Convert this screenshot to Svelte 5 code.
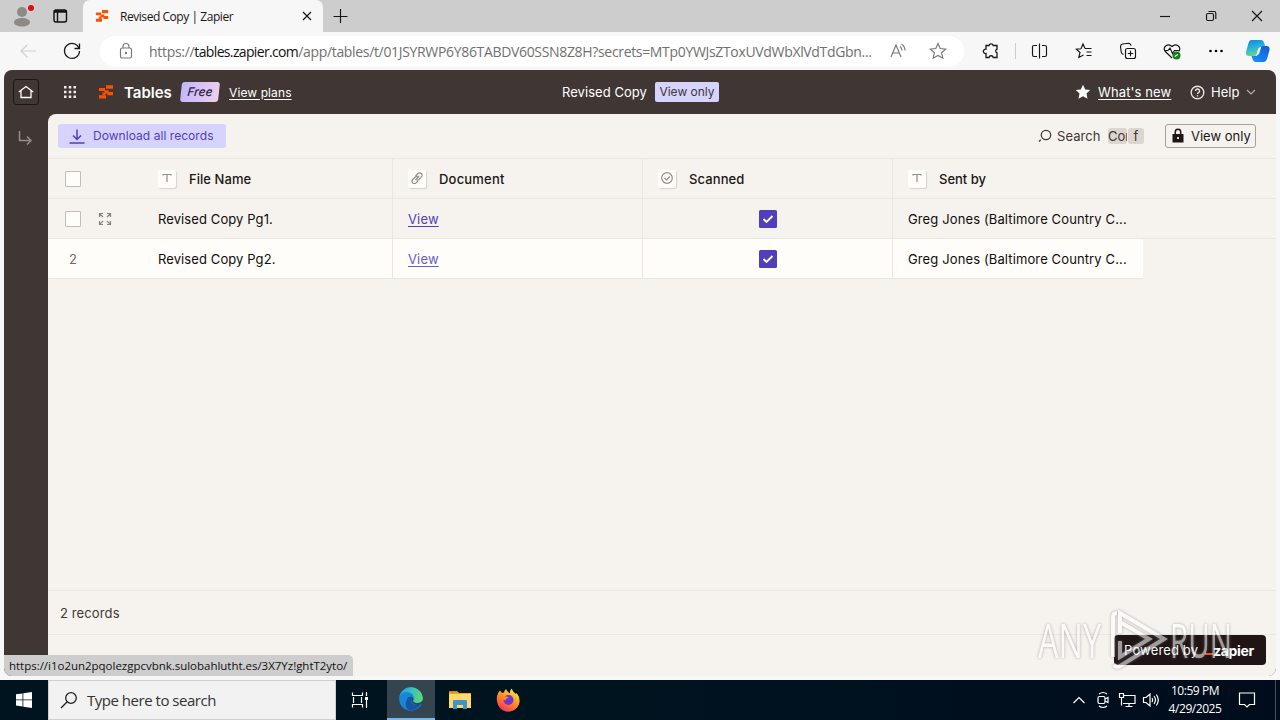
<script lang="ts">
  type ColumnType = 'text' | 'link' | 'check';

  interface RecordRow {
    id: number;
    fileName: string;
    sentBy: string;
    scanned: boolean;
  }

  const columns: { label: string; type: ColumnType; spacing: number }[] = [
    { label: 'File Name', type: 'text', spacing: 0.05 },
    { label: 'Document', type: 'link', spacing: 0.2 },
    { label: 'Scanned', type: 'check', spacing: 0.1 },
    { label: 'Sent by', type: 'text', spacing: 0 }
  ];

  const rows: RecordRow[] = [
    { id: 1, fileName: 'Revised Copy Pg1.', sentBy: 'Greg Jones (Baltimore Country C...', scanned: true },
    { id: 2, fileName: 'Revised Copy Pg2.', sentBy: 'Greg Jones (Baltimore Country C...', scanned: true }
  ];

  let hoveredRow = $state(1);
  let selected = $state<number[]>([]);

  function toggle(id: number): void {
    selected = selected.includes(id) ? selected.filter((item) => item !== id) : [...selected, id];
  }
</script>

{#snippet zapierMark(size: number)}
  <svg width={size} height={size} viewBox="0 0 16 16" fill="#ff4f00">
    <path d="M8 1.200h7v3.600H8zM1 4h6v3H1zM6.500 6.200h4v3.200h-4zM9.500 8h5.500v3.300H9.500zM4.500 8.500h3v2.500h-3zM1 11.200h7v3.400H1z" />
  </svg>
{/snippet}

{#snippet typeIcon(type: ColumnType)}
  <span class="type-icon">
    {#if type === 'text'}
      <svg width="18" height="18" viewBox="0 0 18 18"><path d="M5 5.500V4.500h8v1M9 4.500V12" /></svg>
    {:else if type === 'link'}
      <svg width="18" height="18" viewBox="0 0 18 18">
        <path d="M7.500 10l3.500-4M7.500 6l2.500-2.500a2.300 2.300 0 0 1 3.400 3.400L11 9.500a2.300 2.300 0 0 1-2 .6M10 6.500a2.300 2.300 0 0 0-2.500.3L4.700 9.500A2.300 2.300 0 0 0 8 12.800L10 11" />
      </svg>
    {:else}
      <svg width="18" height="18" viewBox="0 0 18 18"><circle cx="9" cy="8" r="5.300" /><path d="M6.500 8l2 2 3.200-3.500" /></svg>
    {/if}
  </span>
{/snippet}

<div class="screen">
  <header class="tabstrip">
    <span class="slot profile">
      <svg width="26" height="26" viewBox="0 0 26 26">
        <circle cx="13" cy="9" r="5" fill="#8d8986" />
        <path d="M5 19.500c0-3 3.500-4.500 8-4.500s8 1.500 8 4.500c0 2-3.500 4-8 4s-8-2-8-4z" fill="#8d8986" />
        <circle cx="22" cy="5" r="3" fill="#e50914" />
      </svg>
    </span>
    <span class="slot workspaces">
      <svg width="16" height="16" viewBox="0 0 16 16" fill="none" stroke="#111" stroke-width="1.400">
        <rect x="2" y="2" width="12.500" height="12" rx="2" /><path d="M2 3.500h12.500" stroke-width="2.400" /><path d="M5.500 4v10" />
      </svg>
    </span>
    <div class="tab">
      {@render zapierMark(14)}
      <span class="tab-title">Revised Copy | Zapier</span>
      <svg width="12" height="12" viewBox="0 0 12 12" class="line"><path d="M2 2l8 8M10 2l-8 8" /></svg>
    </div>
    <span class="slot new-tab">
      <svg width="16" height="16" viewBox="0 0 16 16" class="line"><path d="M7.500 1v14M.5 8.500h14" /></svg>
    </span>
    <div class="window-controls">
      <svg width="46" height="32" viewBox="0 0 46 32" class="line"><path d="M18 16.500h10" /></svg>
      <svg width="46" height="32" viewBox="0 0 46 32" class="line">
        <rect x="18.500" y="13.500" width="7" height="7" rx="1.500" /><path d="M20.500 11.500H26q1.800 0 1.800 1.800V19" />
      </svg>
      <svg width="46" height="32" viewBox="0 0 46 32" class="line"><path d="M18 11l10 10M28 11L18 21" /></svg>
    </div>
  </header>

  <div class="navbar">
    <span class="tool">
      <svg width="20" height="20" viewBox="0 0 20 20" class="line faint"><path d="M18 10H3M9.500 3.500L3 10l6.500 6.500" /></svg>
    </span>
    <span class="tool">
      <svg width="20" height="20" viewBox="0 0 20 20" class="line"><path d="M17 7.200A7.500 7.500 0 1 0 17.500 10M17.500 2.500v5h-5" stroke-width="1.300" /></svg>
    </span>
    <div class="address">
      <svg width="14" height="18" viewBox="0 0 14 18" class="line grey">
        <rect x="1.500" y="6" width="11" height="10" rx="1.800" /><path d="M4 6V4.500a3 3 0 0 1 6 0V6" /><circle cx="7" cy="11" r=".6" />
      </svg>
      <span class="url">https://<b>tables.zapier.com</b><span class="path">/app/tables/t/01JSYRWP6Y86TABDV60SSN8Z8H?secrets=MTp0YWJsZToxUVdWbXlVdTdGbn...</span></span>
      <svg width="18" height="18" viewBox="0 0 18 18" class="line grey read">
        <path d="M2 15L7 3l5 12M4 11h6M11 4.500q2 1.500 2 4M12.500 2q3.500 2.500 3.500 6.500" />
      </svg>
      <svg width="18" height="18" viewBox="0 0 18 18" class="line grey">
        <path d="M9 1.500l2.200 5 5.500.6-4.100 3.700 1.200 5.400L9 13.500l-4.800 2.700 1.200-5.400L1.300 7.100l5.500-.6z" />
      </svg>
    </div>
    <span class="tool">
      <svg width="18" height="18" viewBox="0 0 18 18" class="line">
        <path d="M4 3.500h3a2.200 2.200 0 0 1 4.200 0H15v3.700a1.900 1.900 0 0 0 0 3.600v4.700h-3.700a2.200 2.200 0 0 0-4.300 0H4v-4a2.200 2.200 0 1 1 0-4.300z" stroke-width="1.300" />
      </svg>
    </span>
    <span class="divider"></span>
    <span class="tool">
      <svg width="18" height="18" viewBox="0 0 18 18" class="line">
        <path d="M8.500 1.500v15M6 3.500H3q-1.500 0-1.500 1.500v8q0 1.500 1.500 1.500h3M11 3.500h3q1.500 0 1.500 1.500v8q0 1.500-1.500 1.500h-3" />
      </svg>
    </span>
    <span class="tool">
      <svg width="18" height="18" viewBox="0 0 18 18" class="line">
        <path d="M10 6.500h6.500M11.500 10h5M11.500 13.500h5M10 6.500L8 2 6 6.700l-4.700.5L5 10.500 3.800 15.500 8.500 13" />
      </svg>
    </span>
    <span class="tool">
      <svg width="18" height="18" viewBox="0 0 18 18" class="line">
        <rect x="6.500" y="6.500" width="10" height="10" rx="2" /><path d="M11.500 8.800v5.400M8.800 11.500h5.400M4.500 12.500Q2.500 12 2.200 10L1.500 4.500Q1.500 2.500 3.500 2l6-.8q2 0 2.500 2.500" />
      </svg>
    </span>
    <span class="tool">
      <svg width="18" height="18" viewBox="0 0 18 18" class="line">
        <path d="M9 16L2.300 9.500C-1 5 5 .5 9 4.500c4-4 10 .5 6.700 5M1 8.500h4l2-2.500 2.500 5.500 2-3h4" />
        <circle cx="13.500" cy="13.500" r="4" fill="#168018" stroke="none" /><path d="M11.800 14.500l3-2" stroke="#fff" />
      </svg>
    </span>
    <span class="tool">
      <svg width="18" height="18" viewBox="0 0 18 18"><circle cx="3.500" cy="9" r="1.300" /><circle cx="9" cy="9" r="1.300" /><circle cx="14.500" cy="9" r="1.300" /></svg>
    </span>
    <span class="tool copilot">
      <svg width="26" height="24" viewBox="0 0 26 24">
        <defs>
          <linearGradient id="cp-left" x1="0" y1="0" x2=".3" y2="1"><stop offset="0" stop-color="#1682d8" /><stop offset=".55" stop-color="#28b5dc" /><stop offset="1" stop-color="#65d68b" /></linearGradient>
          <linearGradient id="cp-right" x1="0" y1="1" x2="1" y2="0"><stop offset="0" stop-color="#1796ff" /><stop offset="1" stop-color="#1658d4" /></linearGradient>
        </defs>
        <path d="M6 1h10q2.500 0 3.500 4l.8 3H16q-2 0-2.800 2.500l-1.500 5Q11 17 8.500 17H4q-3.500 0-3-4L3.500 4Q4.500 1 6 1z" fill="url(#cp-left)" />
        <path d="M17 7h4.500q3.500 0 3 4L22 20q-1 3-3 3h-8q-2.500 0-3.500-3l-1-3H10q2 0 2.800-2.500l1.500-5Q15 7 17 7z" fill="url(#cp-right)" />
        <path d="M13.500 9.500l3-2.500-2.500 8-3 2z" fill="#f5faff" />
      </svg>
    </span>
  </div>

  <div class="page">
    <div class="app-header">
      <span class="home">
        <svg width="16" height="16" viewBox="0 0 16 16" fill="none" stroke="#fff" stroke-width="1.300"><path d="M.8 8L8 2.500 15.200 8M3 6.500v7h10v-7" /></svg>
      </span>
      <svg class="grid-icon" width="12" height="12" viewBox="0 0 12 12" fill="#eee">
        {#each [0, 4.75, 9.5] as y}
          {#each [0, 4.75, 9.5] as x}
            <rect {x} {y} width="2.500" height="2.500" />
          {/each}
        {/each}
      </svg>
      <span class="brand-mark">{@render zapierMark(16)}</span>
      <span class="brand">Tables</span>
      <span class="free"><i>Free</i></span>
      <a class="plans" href="#plans">View plans</a>
      <span class="doc-title">Revised Copy</span>
      <span class="view-tag">View only</span>
      <svg class="star" width="16" height="16" viewBox="0 0 16 16" fill="#fff"><path d="M8 .8l2.200 4.700 5 .6-3.700 3.500 1 5.200L8 12.200l-4.500 2.600 1-5.200L.8 6.100l5-.6z" /></svg>
      <a class="whats-new" href="#new">What's new</a>
      <svg class="help-icon" width="15" height="15" viewBox="0 0 15 15" fill="none" stroke="#e8e3df" stroke-width="1.400">
        <circle cx="7.500" cy="7.500" r="6.300" /><path d="M5.500 6a2 2 0 1 1 3 1.700q-1 .5-1 1.300M7.500 10.200v1.300" />
      </svg>
      <span class="help">Help</span>
      <svg width="10" height="6" viewBox="0 0 10 6" fill="none" stroke="#b5aeaa" stroke-width="1.200"><path d="M1 1l4 4 4-4" /></svg>
    </div>

    <div class="app-body">
      <aside>
        <svg width="16" height="16" viewBox="0 0 16 16" fill="none" stroke="#958d89" stroke-width="1.500"><path d="M1.500 0v9.500h11M9 5.500l4 4-4 4" /></svg>
      </aside>
      <main>
        <div class="actions">
          <button class="download" type="button">
            <svg width="16" height="16" viewBox="0 0 16 16" fill="none" stroke="#503ebd" stroke-width="1.500"><path d="M8 1.500v10M4 7.500L8 11.500 12 7.500M.5 15h15" /></svg>
            <span>Download all records</span>
          </button>
          <svg class="search-icon" width="14" height="14" viewBox="0 0 14 14" fill="none" stroke="#403734" stroke-width="1.300"><circle cx="8" cy="6" r="4.700" /><path d="M4 9.500M2.800 10.800L1 12.500" /></svg>
          <span class="search">Search</span>
          <kbd class="ctrl">Cor</kbd><kbd class="key">f</kbd>
          <button class="view-only" type="button">
            <svg width="12" height="16" viewBox="0 0 12 16"><path d="M.5 6h11v8.500H.5z" fill="#201515" /><path d="M3.300 6V4a2.700 2.700 0 0 1 5.400 0v2" fill="none" stroke="#201515" stroke-width="1.500" /><circle cx="6" cy="10" r="1.100" fill="#fff" /></svg>
            View only
          </button>
        </div>

        <div class="row head">
          {#each columns as column, index}
            <div class="cell" class:first={index === 0}>
              {#if index === 0}
                <span class="lead"><span class="box"></span></span>
              {/if}
              {@render typeIcon(column.type)}
              <span class="label" style:letter-spacing="{column.spacing}px">{column.label}</span>
            </div>
          {/each}
        </div>

        {#each rows as row (row.id)}
          <div class="row" class:plain={row.id !== hoveredRow}>
            <div class="cell first">
              <span class="lead">
                {#if row.id === hoveredRow}
                  <button class="box" class:on={selected.includes(row.id)} type="button" aria-label="Select record" onclick={() => toggle(row.id)}></button>
                  <svg class="expand" width="14" height="14" viewBox="0 0 14 14" fill="none" stroke="#8b837f" stroke-width="1.200">
                    <path d="M1.500 5V1.500H5M1.500 1.500L5 5M9 1.500h3.500V5M12.500 1.500L9 5M1.500 9v3.500H5M1.500 12.500L5 9M12.500 9v3.500H9M12.500 12.500L9 9" />
                  </svg>
                {:else}
                  <span class="number">{row.id}</span>
                {/if}
              </span>
              <span class="value">{row.fileName}</span>
            </div>
            <div class="cell"><a class="view" class:dark={row.id === hoveredRow} href="#view">View</a></div>
            <div class="cell center">
              {#if row.scanned}
                <svg width="18" height="18" viewBox="0 0 18 18"><rect width="18" height="18" rx="1.500" fill="#503ebd" /><path d="M4.500 9l3 3 6-6" fill="none" stroke="#fff" stroke-width="1.900" /></svg>
              {/if}
            </div>
            <div class="cell"><span class="value sender">{row.sentBy}</span></div>
          </div>
        {/each}

        <div class="spacer"></div>
        <div class="records">{rows.length} records</div>
        <div class="bottom">
          <div class="powered"><span>Powered by</span><span class="logo"><i></i>zapier</span></div>
        </div>
      </main>
    </div>
    <div class="status">https://i1o2un2pqolezgpcvbnk.sulobahlutht.es/3X7Yz!ghtT2yto/</div>
    <svg class="watermark" width="200" height="70" viewBox="0 0 200 70">
      <g class="mark">
        <text x="3" y="53" textLength="63" lengthAdjust="spacingAndGlyphs">ANY</text>
        <text x="135" y="53" textLength="62" lengthAdjust="spacingAndGlyphs">RUN</text>
        <path d="M78 52V12q0-4 4-4M85 28V8l44 26-44 27q-3 2-6-1M85 36v16l29-18-29-17" />
      </g>
    </svg>
  </div>

  <footer class="taskbar">
    <span class="start">
      <svg width="16" height="16" viewBox="0 0 16 16" fill="#fff"><path d="M0 2.300L6.500 1.400v6.100H0zM7.300 1.200L16 0v7.500H7.300zM0 8.300h6.500v6.200L0 13.600zM7.300 8.300H16V16l-8.700-1.200z" /></svg>
    </span>
    <div class="search-box">
      <svg width="18" height="18" viewBox="0 0 18 18" fill="none" stroke="#222" stroke-width="1.300"><circle cx="11" cy="7" r="5.300" /><path d="M7.200 10.800L1 17" /></svg>
      <span>Type here to search</span>
    </div>
    <span class="task">
      <svg width="18" height="18" viewBox="0 0 18 18" fill="none" stroke="#fff" stroke-width="1.200"><path d="M1.500 1.500v3h10v-3M1.500 16.500v-3h10v3M2.500 6v6M10.500 6v6M15.500 1v4M15.500 9v8" /><path d="M14 6h3v3h-3z" fill="#fff" stroke="none" /></svg>
    </span>
    <span class="task active">
      <svg width="24" height="24" viewBox="0 0 24 24">
        <defs>
          <linearGradient id="edge-top" x1="0" y1=".5" x2="1" y2=".6"><stop offset="0" stop-color="#249fdf" /><stop offset=".5" stop-color="#37c1c3" /><stop offset="1" stop-color="#61d965" /></linearGradient>
        </defs>
        <circle cx="12" cy="12" r="11.800" fill="#1687d6" />
        <path d="M.3 11C2 4 10 3 14 8c1 2 1 4 0 6 1 3 9 3 9.800-2C24 5 18 .2 12 .2 6 .2 1 4.500.3 11z" fill="url(#edge-top)" />
        <path d="M8 13c0-3 3-4 5-3-3 4 0 8 4 8 2 0 4-1 5-1.500-3 6-9 8-12 6.500-4-2-4-8-2-10z" fill="#1455a5" />
        <path d="M13 10c2 1 1.500 3 1 4.200 1.500 2.600 7 2.600 8.700.3l1.300-.5v2.500l-2 .5c-3 1.500-6 1-8-.5-2-1.500-2.500-4.500-1-6.500z" fill="#34454f" />
      </svg>
    </span>
    <span class="task">
      <svg width="22" height="20" viewBox="0 0 22 20">
        <path d="M0 1h8l2 2h12v15H0z" fill="#e8a820" /><path d="M0 4h22v14H0z" fill="#ffd96a" /><path d="M4 19v-8q0-1 1-1h12q1 0 1 1v8h-4v-4H8v4z" fill="#3f94cf" /><path d="M0 1h7l1 1.500H0z" fill="#c98a1a" />
      </svg>
    </span>
    <span class="task">
      <svg width="24" height="24" viewBox="0 0 24 24">
        <defs>
          <linearGradient id="fox" x1=".8" y1="0" x2=".2" y2="1"><stop offset="0" stop-color="#fff04a" /><stop offset=".45" stop-color="#ff9420" /><stop offset="1" stop-color="#f82a63" /></linearGradient>
        </defs>
        <path d="M1 13C0 8 2 5 4 2.500L6 5l2-.5Q8.500 2 10 1q.5 2.500 4 4.500Q14 2 15.500.500 17 4 20 6l.7-1Q24 9 23.500 14c-.8 6-6 9.700-11.500 9.700S1.500 19 1 13z" fill="url(#fox)" />
        <circle cx="12.500" cy="12" r="5" fill="#7136cf" /><path d="M6 9q4-2 7 1-3 0-3.500 2c-1 1-3-.5-3.500-3z" fill="#ff8a1d" />
      </svg>
    </span>
    <div class="tray">
      <span class="tray-icon"><svg width="14" height="8" viewBox="0 0 14 8"><path d="M1.500 7L7 1.500 12.500 7" /></svg></span>
      <span class="tray-icon"><svg width="14" height="18" viewBox="0 0 14 18"><rect x="2" y="5.500" width="7" height="7" rx="1.500" /><path d="M9 8l3-1.500v5L9 10M3 3q4-3 8 0M3 15q4 3 8 0" /></svg></span>
      <span class="tray-icon"><svg width="18" height="16" viewBox="0 0 18 16"><path d="M5.500 3.500H17v8H5M11 11.500v3M7.500 14.500h7M1.500 1.500h4v4h-4zM3.500 5.500v8" /></svg></span>
      <span class="tray-icon"><svg width="18" height="16" viewBox="0 0 18 16"><path d="M1.500 5.500H4L8 2v12L4 10.500H1.500zM10 6q1.200 2 0 4M12 4q3 4 0 8M14.300 2.500q4 5.500 0 11" /></svg></span>
      <div class="clock"><span>10:59 PM</span><span>4/29/2025</span></div>
      <span class="notice"><svg width="18" height="18" viewBox="0 0 18 18"><path d="M1.500 2h15v11.500h-5L9 16l-2.500-2.500h-5z" /></svg></span>
    </div>
  </footer>
</div>

<style>
  :global(body) {
    margin: 0;
  }

  .screen {
    display: flex;
    flex-direction: column;
    width: 1280px;
    height: 720px;
    overflow: hidden;
    background: #f7f7f8;
    font-family: Inter, 'Liberation Sans', sans-serif;
    font-size: 13px;
    color: #201515;
    white-space: nowrap;
  }

  svg {
    display: block;
    flex: none;
  }

  .line {
    fill: none;
    stroke: #161616;
    stroke-width: 1.15;
  }

  .grey {
    stroke: #777;
  }

  .faint {
    stroke: #cfcfcf;
  }

  .tabstrip {
    display: flex;
    height: 32px;
    background: #cdcdcd;
    font-family: 'Open Sans', 'Noto Sans', sans-serif;
  }

  .slot {
    display: flex;
    align-items: center;
    justify-content: center;
  }

  .profile {
    width: 44px;
  }

  .workspaces {
    width: 32px;
    margin-right: 7px;
  }

  .tab {
    display: flex;
    align-items: center;
    width: 240px;
    box-sizing: border-box;
    padding: 0 10px 0 12px;
    border-radius: 7px 7px 0 0;
    background: #f7f7f7;
  }

  .tab-title {
    flex: 1;
    margin-left: 11px;
    font-size: 12px;
    letter-spacing: -0.45px;
  }

  .new-tab {
    width: 36px;
  }

  .window-controls {
    display: flex;
    margin-left: auto;
  }

  .navbar {
    display: flex;
    align-items: center;
    height: 38px;
    padding-left: 6px;
    background: #f7f7f7;
  }

  .tool {
    display: flex;
    justify-content: center;
    width: 44px;
  }

  .copilot {
    width: 40px;
  }

  .divider {
    width: 1px;
    height: 16px;
    margin: 0 2px;
    background: #ccc;
  }

  .address {
    display: flex;
    align-items: center;
    width: 864px;
    height: 31px;
    box-sizing: border-box;
    margin: 0 5px 0 6px;
    padding: 0 17px 0 19px;
    border-radius: 16px;
    background: #fff;
  }

  .url {
    flex: 1;
    margin-left: 16px;
    font-family: 'Open Sans', 'Noto Sans', sans-serif;
    font-size: 14px;
    letter-spacing: -0.3px;
    color: #707070;
  }

  .url b {
    font-weight: 400;
    letter-spacing: -0.65px;
    color: #111;
  }

  .path {
    letter-spacing: -0.33px;
  }

  .read {
    margin-right: 22px;
  }

  .page {
    position: relative;
    display: flex;
    flex-direction: column;
    height: 606px;
    margin: 0 4px 4px;
    border-radius: 8px;
    overflow: hidden;
    background: #403734;
  }

  .app-header {
    display: flex;
    align-items: center;
    height: 44px;
    box-sizing: border-box;
    padding: 0 20px 0 9px;
    color: #fff;
  }

  .app-header a {
    color: #fff;
    text-underline-offset: 2px;
  }

  .home {
    display: flex;
    align-items: center;
    justify-content: center;
    width: 24px;
    height: 24px;
    border: 1px solid #201515;
    border-radius: 3px;
  }

  .grid-icon {
    margin-left: 25px;
  }

  .brand-mark {
    margin: 0 10px 0 22px;
  }

  .brand {
    width: 57px;
    font-size: 15px;
    font-weight: 600;
  }

  .free {
    width: 38px;
    height: 20px;
    line-height: 20px;
    border-radius: 3px;
    background: linear-gradient(100deg, #c1b6ff, #efcfea);
    transform: skewX(-6deg);
    text-align: center;
    font-size: 12px;
    font-weight: 500;
    color: #2d2440;
  }

  .plans {
    width: 333px;
    margin-left: 10px;
    font-size: 12px;
    letter-spacing: 0.1px;
  }

  .doc-title {
    width: 93px;
    letter-spacing: 0.05px;
  }

  .view-tag {
    width: 64px;
    height: 20px;
    line-height: 20px;
    border-radius: 2px;
    background: #d7d3ff;
    text-align: center;
    font-size: 12px;
    color: #413735;
  }

  .star {
    margin: 0 7px 0 auto;
  }

  .whats-new {
    width: 74px;
    letter-spacing: 0.12px;
  }

  .help-icon {
    margin: 0 6px 0 18px;
  }

  .help {
    width: 35px;
  }

  .app-body {
    display: flex;
    flex: 1;
  }

  aside {
    width: 44px;
    padding: 17px 0 0 14px;
    box-sizing: border-box;
  }

  main {
    display: flex;
    flex: 1;
    flex-direction: column;
    border-top-left-radius: 8px;
    background: #f6f3ee;
  }

  .actions {
    display: flex;
    align-items: center;
    height: 44px;
    box-sizing: border-box;
    padding: 0 20px 0 10px;
  }

  button {
    display: flex;
    align-items: center;
    box-sizing: border-box;
    height: 24px;
    font: inherit;
  }

  .download {
    width: 168px;
    margin-right: auto;
    padding: 0 0 0 11px;
    gap: 8px;
    border: 0;
    border-radius: 3px;
    background: #d7d3ff;
    font-size: 12px;
    letter-spacing: 0.05px;
    color: #503ebd;
  }

  .download span {
    padding-bottom: 1px;
  }

  .search {
    width: 46px;
    margin: 0 0 0 5px;
    letter-spacing: 0.05px;
    color: #403734;
  }

  kbd {
    height: 16px;
    line-height: 16px;
    margin-left: 5px;
    border-radius: 3px;
    background: #ddd5cf;
    font-family: inherit;
    font-size: 13px;
    color: #403734;
    overflow: hidden;
  }

  .ctrl {
    width: 19px;
  }

  .key {
    width: 16px;
    margin-left: 1px;
    text-align: center;
  }

  .view-only {
    width: 91px;
    margin-left: 21px;
    padding: 0 0 0 6px;
    gap: 7px;
    border: 1px solid #a8a09a;
    border-radius: 3px;
    background: transparent;
    color: #201515;
  }

  .row {
    display: flex;
    height: 40px;
    box-sizing: border-box;
    border-bottom: 1px solid #ebe7df;
  }

  .row.head {
    border-top: 1px solid #ebe7df;
    height: 41px;
  }

  .row.plain {
    width: 1095px;
    background: #fffdf9;
  }

  .cell {
    display: flex;
    align-items: center;
    width: 250px;
    box-sizing: border-box;
    padding: 1px 0 0 15px;
    border-right: 1px solid #ebe7df;
  }

  .cell.first {
    width: 345px;
    padding-left: 0;
  }

  .cell:last-child {
    border-right: 0;
  }

  .cell.center {
    justify-content: center;
    padding-left: 0;
  }

  .lead {
    display: flex;
    align-items: center;
    width: 93px;
    padding-left: 17px;
  }

  .box {
    width: 16px;
    height: 16px;
    box-sizing: border-box;
    padding: 0;
    border: 1px solid #c4bdb7;
    border-radius: 1px;
    background: #fffdf9;
  }

  .box.on {
    background: #503ebd;
  }

  .expand {
    margin-left: 17px;
  }

  .number {
    width: 16px;
    text-align: center;
    color: #716864;
  }

  .type-icon {
    width: 18px;
    height: 18px;
    border-radius: 2px;
    background: #fffdf9;
    box-shadow: 1px 1px 1px #d8d3cc;
  }

  .type-icon svg {
    fill: none;
    stroke: #958d89;
    stroke-width: 1.2;
  }

  .label {
    margin-left: 13px;
    font-weight: 500;
  }

  .value {
    letter-spacing: 0.1px;
    color: #100c0c;
  }

  .sender {
    letter-spacing: 0.12px;
  }

  .view {
    letter-spacing: 0.15px;
    color: #695ac8;
    text-underline-offset: 2px;
  }

  .view.dark {
    color: #503ebd;
  }

  .spacer {
    flex: 1;
  }

  .records {
    height: 45px;
    line-height: 45px;
    box-sizing: border-box;
    padding-left: 12px;
    border: 1px solid #ebe7df;
    border-width: 1px 0;
    letter-spacing: 0.12px;
    color: #403734;
  }

  .bottom {
    display: flex;
    justify-content: flex-end;
    height: 41px;
    padding-right: 10px;
  }

  .powered {
    display: flex;
    align-items: center;
    width: 152px;
    height: 30px;
    box-sizing: border-box;
    padding-left: 10px;
    border-radius: 4px;
    background: #201515;
    letter-spacing: 0.15px;
    color: #fff;
  }

  .logo {
    display: flex;
    align-items: center;
    margin-left: 7px;
    font-size: 14px;
    font-weight: 700;
    letter-spacing: -0.35px;
  }

  .logo i {
    width: 8px;
    height: 2px;
    margin-top: 7px;
    background: #ff4f00;
  }

  .status {
    position: absolute;
    left: 0;
    bottom: 0;
    width: 349px;
    height: 21px;
    line-height: 21px;
    box-sizing: border-box;
    padding-left: 5px;
    border-top-right-radius: 5px;
    background: #cdcdcd;
    font-family: 'Open Sans', 'Noto Sans', sans-serif;
    font-size: 11.5px;
    letter-spacing: -0.02px;
    color: #111;
  }

  .watermark {
    position: absolute;
    left: 1031px;
    top: 535px;
    opacity: 0.58;
    filter: drop-shadow(0 0 1.5px #7a7674);
  }

  .mark {
    fill: #fff;
    font-family: 'Open Sans', sans-serif;
    font-size: 48px;
    font-weight: 400;
  }

  .mark path {
    fill: none;
    stroke: #fff;
    stroke-width: 4;
  }

  .taskbar {
    display: flex;
    height: 40px;
    background: linear-gradient(90deg, #001420 0 45%, #000c1c);
    font-family: 'Open Sans', 'Noto Sans', sans-serif;
    color: #fff;
  }

  .start,
  .task {
    display: flex;
    align-items: center;
    justify-content: center;
    width: 48px;
  }

  .search-box {
    display: flex;
    align-items: center;
    width: 288px;
    box-sizing: border-box;
    padding-left: 11px;
    gap: 9px;
    border: 1px solid #cfcfcf;
    background: #f2f2f2;
    font-size: 15px;
    letter-spacing: -0.48px;
    color: #333;
  }

  .task.active {
    margin: 0 1px 0 3px;
    box-sizing: border-box;
    border-bottom: 2px solid #76b9ed;
    background: #34454f;
  }

  .tray {
    display: flex;
    align-items: center;
    margin-left: auto;
  }

  .tray svg {
    fill: none;
    stroke: #fff;
    stroke-width: 1.2;
  }

  .tray-icon {
    display: flex;
    justify-content: center;
    width: 24px;
  }

  .clock {
    display: flex;
    flex-direction: column;
    align-items: center;
    width: 64px;
    font-size: 12px;
    line-height: 18px;
    letter-spacing: -0.45px;
  }

  .notice {
    display: flex;
    justify-content: center;
    width: 40px;
    height: 40px;
    align-items: center;
    border-right: 1px solid #46505c;
    padding-right: 8px;
    margin-right: 4px;
  }
</style>
